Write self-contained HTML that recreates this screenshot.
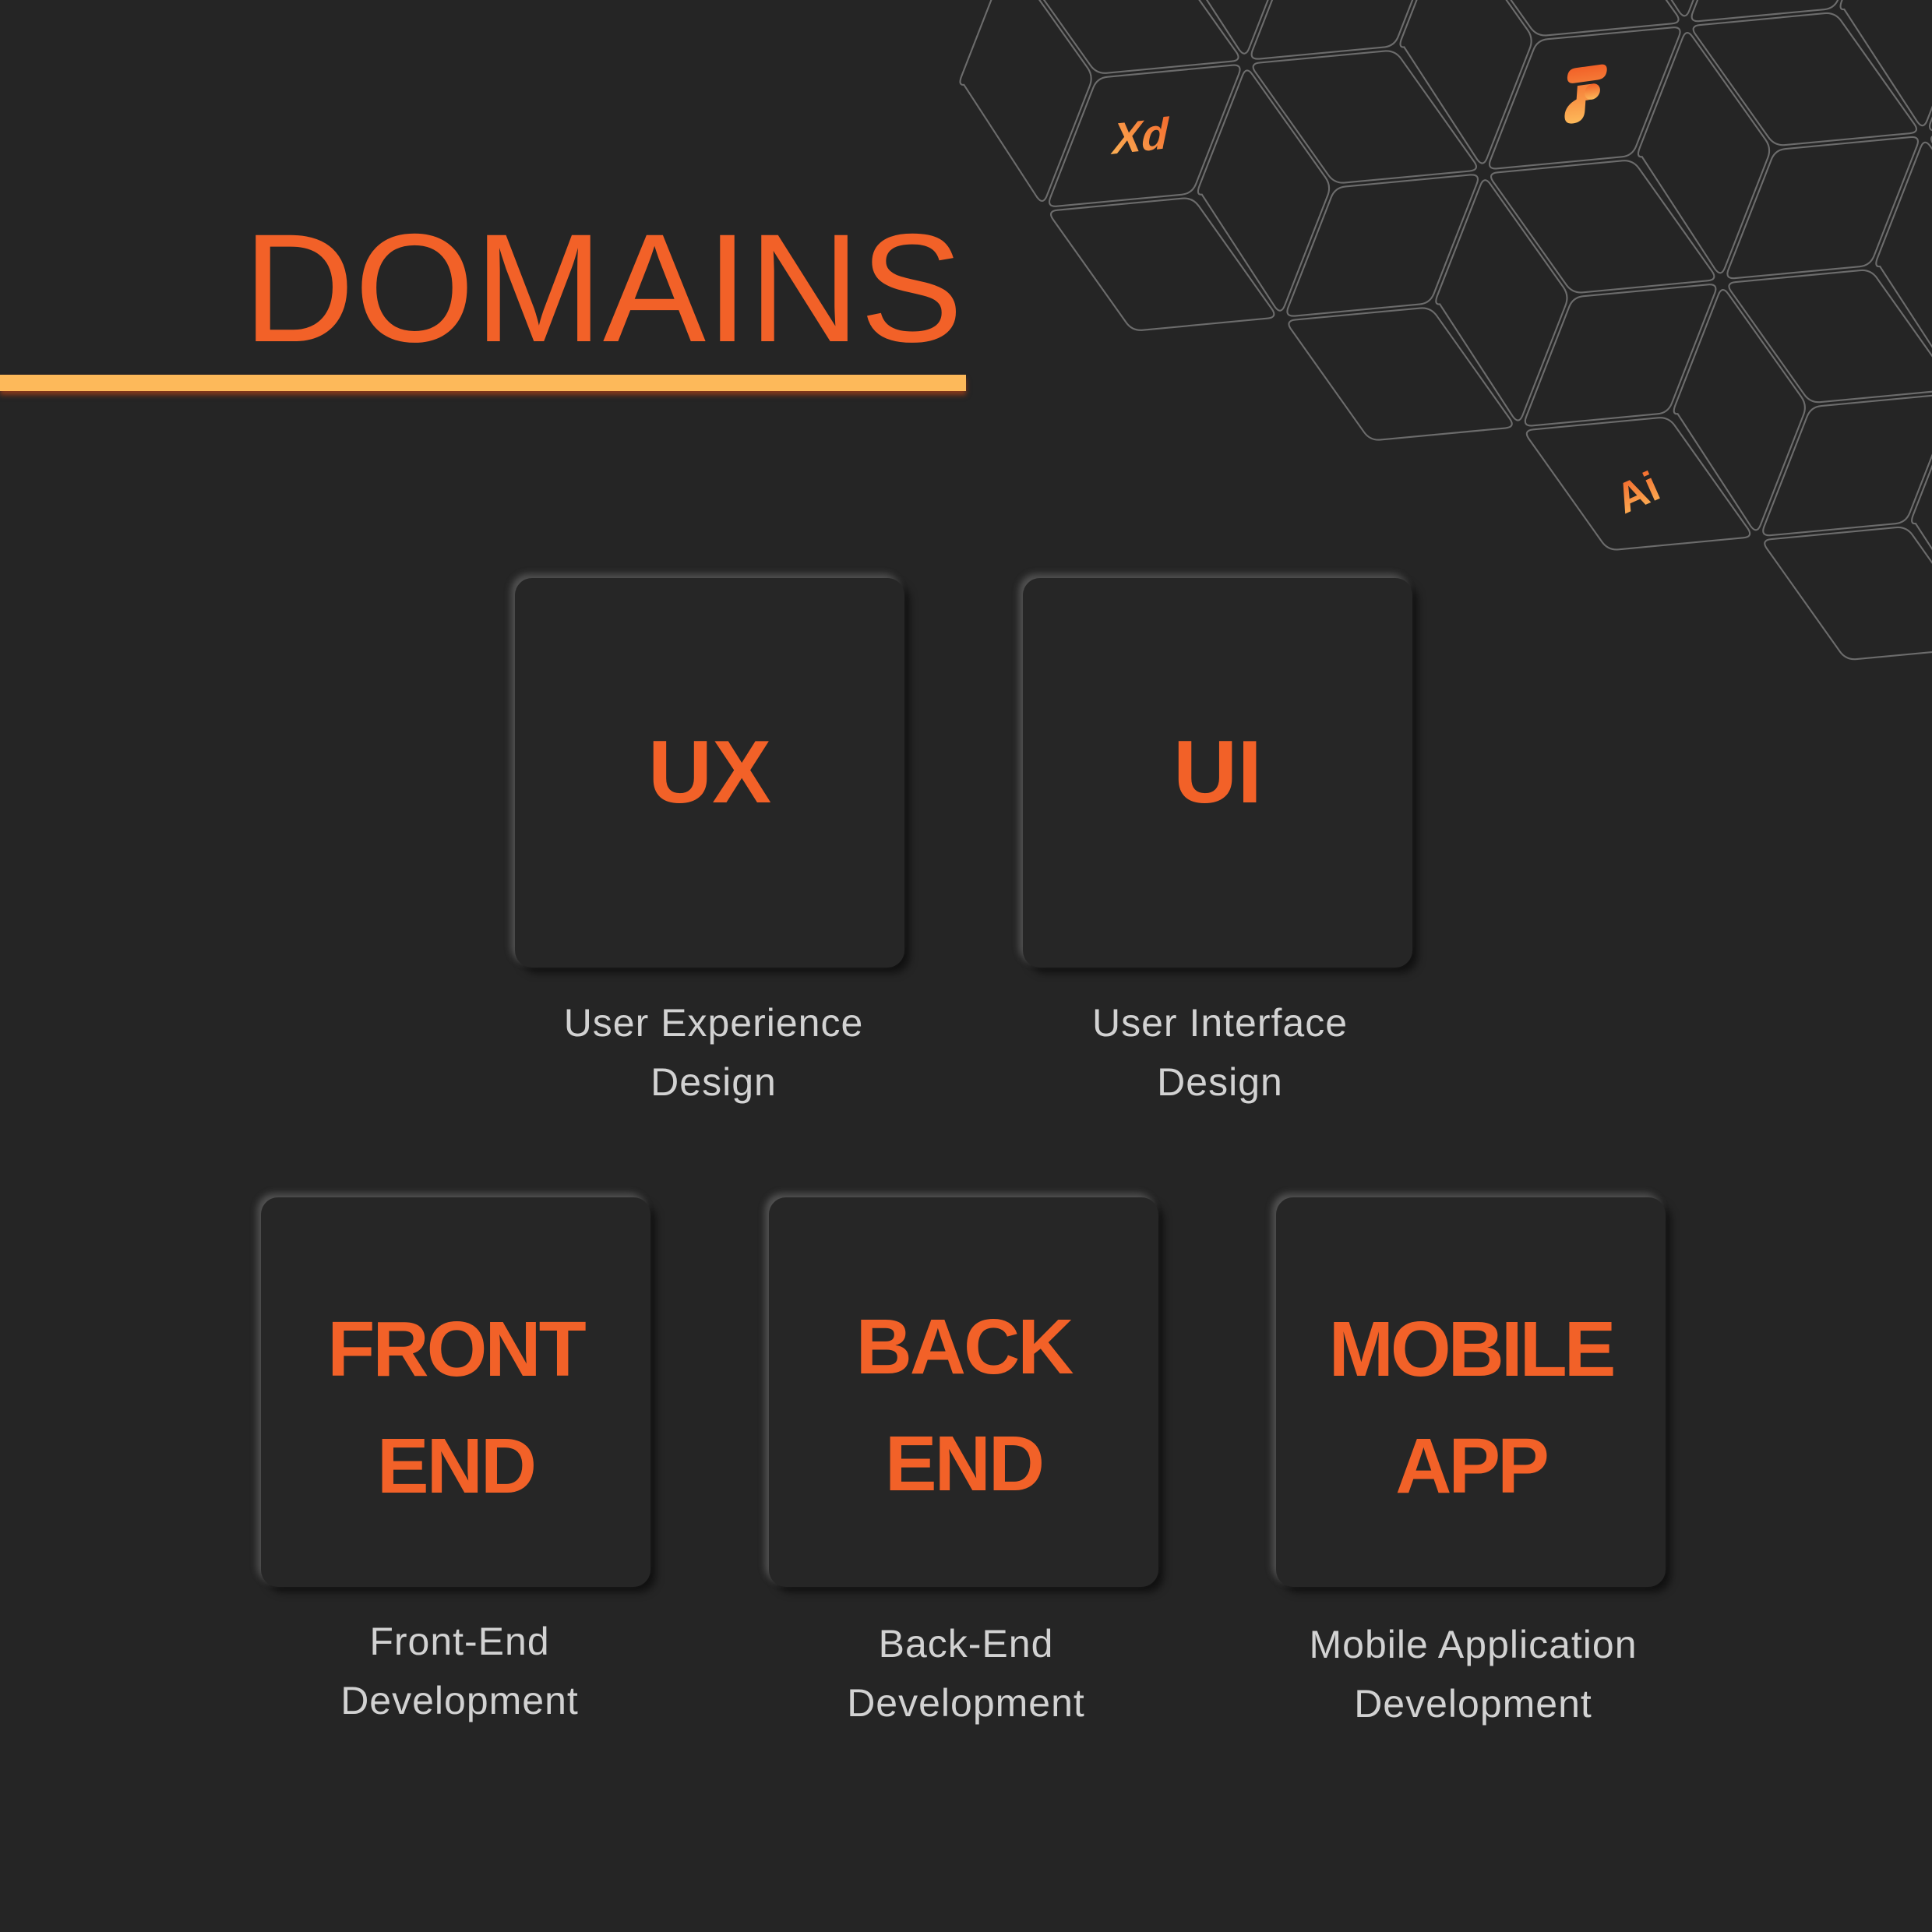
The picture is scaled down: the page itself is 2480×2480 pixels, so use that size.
<!DOCTYPE html>
<html><head><meta charset="utf-8"><style>
html,body{margin:0;padding:0;background:#252525;}
body{width:2480px;height:2480px;position:relative;overflow:hidden;font-family:"Liberation Sans",sans-serif;}
.t{position:absolute;white-space:nowrap;}
.card{position:absolute;width:500px;height:500px;border-radius:22px;background:#262626;
box-shadow:-5px -5px 9px rgba(170,170,170,.35),7px 7px 10px rgba(0,0,0,.55);}
.ct{position:absolute;left:0;width:500px;text-align:center;color:#f26128;font-weight:bold;}
.cap{position:absolute;width:600px;text-align:center;color:#d2d2d2;font-size:50px;line-height:76px;letter-spacing:1px;}
</style></head><body>
<svg width="2480" height="2480" style="position:absolute;left:0;top:0" xmlns="http://www.w3.org/2000/svg">
<defs>
<linearGradient id="g1" x1="0" y1="1" x2="1" y2="0"><stop offset="0" stop-color="#fdb95a"/><stop offset="1" stop-color="#f26128"/></linearGradient>
<linearGradient id="g2" x1="0" y1="1" x2="0" y2="0"><stop offset="0" stop-color="#fdb95a"/><stop offset="1" stop-color="#f26128"/></linearGradient>
<path id="fab" transform="translate(-62.9,-76.6) scale(.97)" d="M49,77.9 L-115.9,93.3 Q-129.8,94.6 -124.7,81.6 L-68,-63.6 Q-62.9,-76.6 -49,-77.9 L115.9,-93.3 Q129.8,-94.6 124.7,-81.6 L68,63.6 Q62.9,76.6 49,77.9Z"/>
<path id="fac" transform="translate(-40,88.4) scale(.97)" d="M26.1,-87.1 L-138.8,-71.7 Q-152.7,-70.4 -144.6,-59 L-48.1,77 Q-40,88.4 -26.1,87.1 L138.8,71.7 Q152.7,70.4 144.6,59 L48.1,-77 Q40,-88.4 26.1,-87.1Z"/>
<path id="fbc" transform="translate(89.8,-6.2) scale(.97)" d="M-84.7,-6.8 L-28,-152 Q-22.9,-165 -14.8,-153.6 L81.7,-17.6 Q89.8,-6.2 84.7,6.8 L28,152 Q22.9,165 14.8,153.6 L-81.7,5.2 Q-89.8,6.2 -84.7,-6.8Z"/>
<g id="cube"><use href="#fab"/><use href="#fac"/><use href="#fbc"/></g>
</defs>
<g fill="none" stroke="#6c6c6c" stroke-width="2.2">
<use href="#fbc" transform="translate(1226.8,110)"/>
<use href="#fac" transform="translate(1486.4,-79.2)"/>
<use href="#fbc" transform="translate(1486.4,-79.2)"/>
<use href="#cube" transform="translate(1532.2,250.8)"/>
<use href="#cube" transform="translate(1837.6,391.6)"/>
<use href="#cube" transform="translate(1791.8,61.6)"/>
<use href="#cube" transform="translate(1746,-268.4)"/>
<use href="#cube" transform="translate(2143,532.4)"/>
<use href="#cube" transform="translate(2097.2,202.4)"/>
<use href="#cube" transform="translate(2051.4,-127.6)"/>
<use href="#cube" transform="translate(2448.4,673.2)"/>
<use href="#cube" transform="translate(2402.6,343.2)"/>
<use href="#cube" transform="translate(2356.8,13.2)"/>
<use href="#cube" transform="translate(2708,484)"/>
<use href="#cube" transform="translate(2662.2,154)"/>
<use href="#cube" transform="translate(2616.4,-176)"/>
</g>
<text x="0" y="0" font-family="Liberation Sans" font-size="56" font-weight="bold" fill="url(#g1)" transform="translate(1425,198) rotate(-6) skewX(-18)">Xd</text>
<g transform="translate(2034,120) rotate(-8) skewX(-12)">
<path d="M-14,-34 L18,-34 Q28,-34 27,-24 Q26,-15 16,-15 L-14,-15 Q-24,-15 -24,-24 Q-24,-34 -14,-34Z M-10,-11 L6,-11 Q16,-11 15,0 Q14,9 5,9 L-10,9Z M-10,6 L2,6 L2,22 Q2,36 -12,36 Q-24,36 -24,24 Q-24,12 -10,6Z" fill="url(#g2)"/>
<circle cx="10" cy="-1" r="10" fill="url(#g2)"/>
</g>
<text x="0" y="0" font-family="Liberation Sans" font-size="54" font-weight="bold" fill="url(#g2)" transform="translate(2085,660) rotate(-24)">Ai</text>
</svg>

<div class="t" style="left:312px;top:250px;font-size:198px;line-height:240px;color:#f26128;">DOMAINS</div>
<div style="position:absolute;left:0;top:481px;width:1240px;height:21px;background:#fdb95a;box-shadow:0 5px 6px rgba(200,70,20,.6);"></div>

<div class="card" style="left:661px;top:742px;"><div class="ct" style="top:192px;font-size:114px;line-height:116px;">UX</div></div>
<div class="card" style="left:1313px;top:742px;"><div class="ct" style="top:192px;font-size:114px;line-height:116px;">UI</div></div>
<div class="cap" style="left:616px;top:1275px;">User Experience<br>Design</div>
<div class="cap" style="left:1266px;top:1275px;">User Interface<br>Design</div>

<div class="card" style="left:335px;top:1537px;"><div class="ct" style="top:120px;font-size:100px;line-height:150px;letter-spacing:-3px;">FRONT<br>END</div></div>
<div class="card" style="left:987px;top:1537px;"><div class="ct" style="top:117px;font-size:100px;line-height:150px;letter-spacing:-3px;">BACK<br>END</div></div>
<div class="card" style="left:1638px;top:1537px;"><div class="ct" style="top:120px;font-size:100px;line-height:150px;letter-spacing:-4px;">MOBILE<br>APP</div></div>
<div class="cap" style="left:290px;top:2069px;">Front-End<br>Development</div>
<div class="cap" style="left:940px;top:2072px;">Back-End<br>Development</div>
<div class="cap" style="left:1591px;top:2073px;">Mobile Application<br>Development</div>
</body></html>
